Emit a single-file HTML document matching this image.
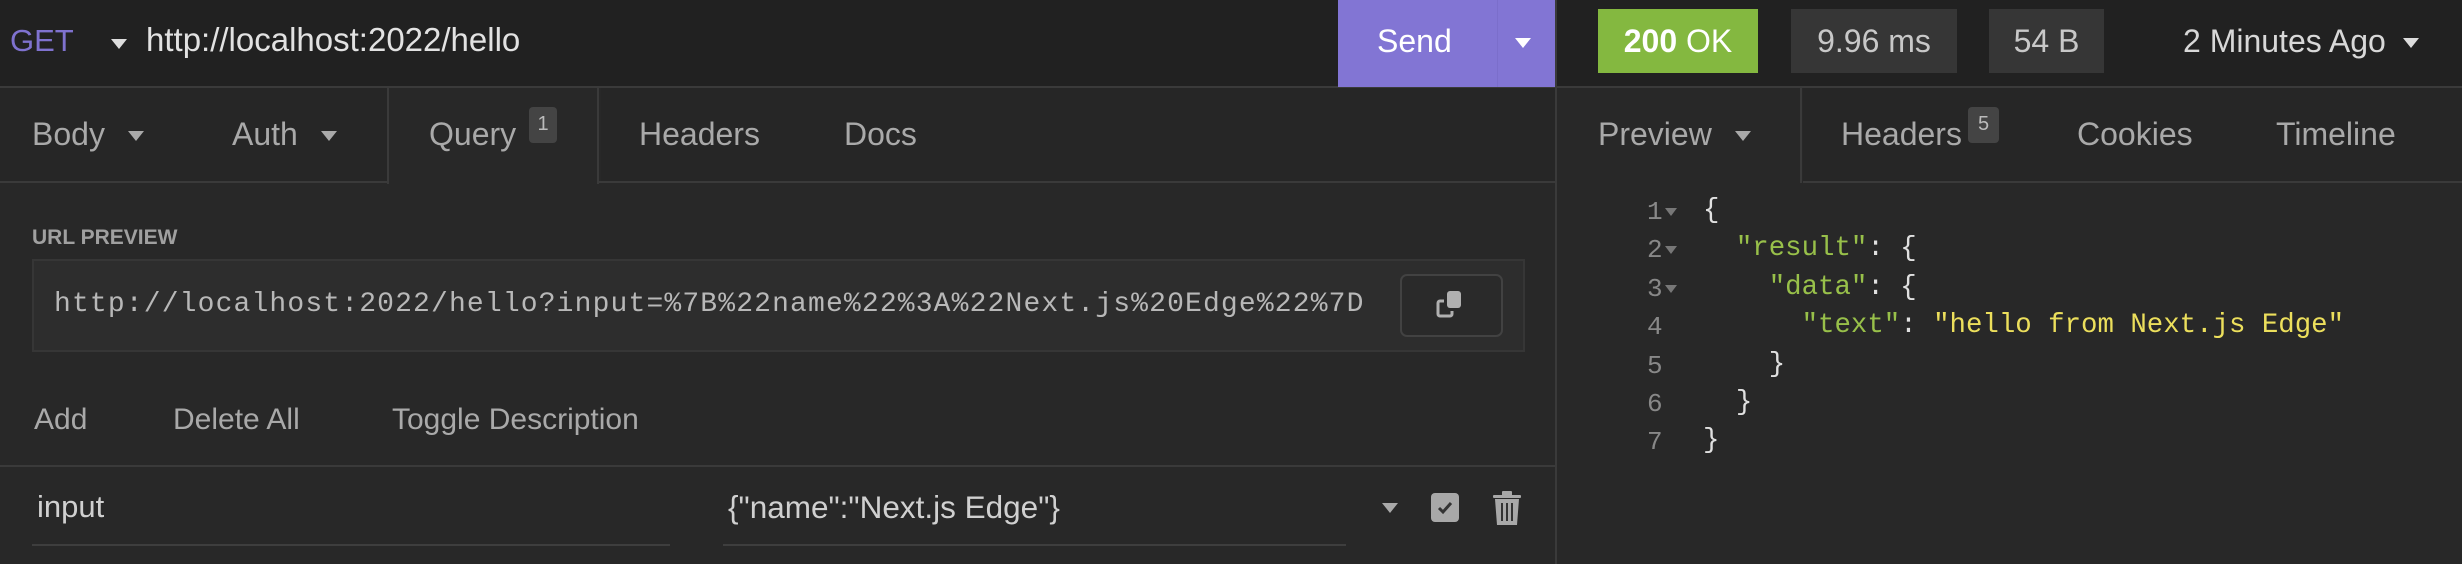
<!DOCTYPE html>
<html><head><meta charset="utf-8"><style>
*{margin:0;padding:0;box-sizing:border-box}
body{width:2462px;height:564px;background:#282828;font-family:"Liberation Sans",sans-serif;color:#a9a9a9;position:relative;overflow:hidden}
.a{position:absolute;white-space:nowrap}
.tri{position:absolute;width:0;height:0;border-left:8px solid transparent;border-right:8px solid transparent;border-top:10px solid #a9a9a9}
.mono{font-family:"Liberation Mono",monospace}
.badge{position:absolute;background:#444;color:#bbb;font-size:20px;border-radius:4px;text-align:center;line-height:34px}
</style></head><body>
<div class="a" style="left:0;top:0;width:2462px;height:87px;background:#212121"></div>
<div class="a" style="left:0;top:86px;width:2462px;height:2px;background:#3a3a3a"></div>
<div class="a" style="left:10px;top:23px;font-size:31px;color:#7f72cf">GET</div>
<div class="tri" style="left:111px;top:39px;border-top-color:#ddd"></div>
<div class="a" style="left:146px;top:21px;font-size:33px;color:#e2e2e2">http://localhost:2022/hello</div>
<div class="a" style="left:1338px;top:0;width:218px;height:87px;background:#8275d4"></div>
<div class="a" style="left:1497px;top:0;width:1px;height:87px;background:#7b6ecb"></div>
<div class="a" style="left:1377px;top:23px;font-size:32px;color:#fff">Send</div>
<div class="tri" style="left:1515px;top:38px;border-top-color:#fff"></div>
<div class="a" style="left:1555px;top:0;width:2px;height:564px;background:#3a3a3a"></div>
<div class="a" style="left:1598px;top:9px;width:160px;height:64px;background:#84b840;color:#fff;font-size:32px;line-height:64px;text-align:center"><b>200</b> OK</div>
<div class="a" style="left:1791px;top:9px;width:166px;height:64px;background:#363636;color:#c8c8c8;font-size:32px;line-height:64px;text-align:center">9.96 ms</div>
<div class="a" style="left:1989px;top:9px;width:115px;height:64px;background:#363636;color:#c8c8c8;font-size:32px;line-height:64px;text-align:center">54 B</div>
<div class="a" style="left:2183px;top:23px;font-size:32px;color:#d8d8d8">2 Minutes Ago</div>
<div class="tri" style="left:2403px;top:38px;border-top-color:#ddd"></div>
<div class="a" style="left:0;top:181px;width:1556px;height:2px;background:#3a3a3a"></div>
<div class="a" style="left:387px;top:88px;width:212px;height:96px;background:#282828;border-left:2px solid #3a3a3a;border-right:2px solid #3a3a3a"></div>
<div class="a" style="left:0;top:88px;width:387px;height:93px;background:#262626"></div>
<div class="a" style="left:601px;top:88px;width:954px;height:93px;background:#262626"></div>
<div class="a" style="left:32px;top:116px;font-size:32px">Body</div>
<div class="tri" style="left:128px;top:131px"></div>
<div class="a" style="left:232px;top:116px;font-size:32px">Auth</div>
<div class="tri" style="left:321px;top:131px"></div>
<div class="a" style="left:429px;top:116px;font-size:32px">Query</div>
<div class="badge" style="left:529px;top:107px;width:28px;height:36px">1</div>
<div class="a" style="left:639px;top:116px;font-size:32px">Headers</div>
<div class="a" style="left:844px;top:116px;font-size:32px">Docs</div>
<div class="a" style="left:32px;top:226px;font-size:21px;font-weight:bold;color:#a0a0a0">URL PREVIEW</div>
<div class="a" style="left:32px;top:259px;width:1493px;height:93px;background:#2d2d2d;border:2px solid #363636"></div>
<div class="a mono" style="left:54px;top:289px;font-size:28px;letter-spacing:1.15px;color:#b8b8b8">http://localhost:2022/hello?input=%7B%22name%22%3A%22Next.js%20Edge%22%7D</div>
<div class="a" style="left:1400px;top:274px;width:103px;height:63px;border:2px solid #424242;border-radius:7px;background:#2a2a2a"></div>
<svg class="a" style="left:1430px;top:288px" width="40" height="36" viewBox="0 0 40 36"><rect x="17" y="3" width="14" height="17" rx="3" fill="#b0b0b0"/><path d="M14 13 H10 a2 2 0 0 0 -2 2 V26 a2 2 0 0 0 2 2 H20 a2 2 0 0 0 2 -2 V23" fill="none" stroke="#b0b0b0" stroke-width="3"/></svg>
<div class="a" style="left:34px;top:403px;font-size:30px">Add</div>
<div class="a" style="left:173px;top:403px;font-size:30px">Delete All</div>
<div class="a" style="left:392px;top:403px;font-size:30px">Toggle Description</div>
<div class="a" style="left:0;top:465px;width:1556px;height:2px;background:#3a3a3a"></div>
<div class="a" style="left:37px;top:489px;font-size:31px;color:#d0d0d0">input</div>
<div class="a" style="left:32px;top:544px;width:638px;height:2px;background:#3e3e3e"></div>
<div class="a" style="left:728px;top:489px;font-size:31.5px;color:#d0d0d0">{"name":"Next.js Edge"}</div>
<div class="a" style="left:723px;top:544px;width:623px;height:2px;background:#3e3e3e"></div>
<div class="tri" style="left:1382px;top:503px"></div>
<div class="a" style="left:1431px;top:493px;width:28px;height:29px;background:#a8a8a8;border-radius:4px"></div>
<svg class="a" style="left:1431px;top:493px" width="28" height="29"><path d="M8 15 L12 19 L20 10" fill="none" stroke="#333" stroke-width="3"/></svg>
<svg class="a" style="left:1492px;top:490px" width="30" height="36" viewBox="0 0 30 36"><rect x="1" y="5" width="28" height="3" rx="1" fill="#a8a8a8"/><rect x="10" y="1" width="10" height="5" rx="1" fill="#a8a8a8"/><path d="M3 9 H27 L25 35 H5 Z" fill="#a8a8a8"/><path d="M10 13 V31 M15 13 V31 M20 13 V31" stroke="#333" stroke-width="2"/></svg>
<div class="a" style="left:1557px;top:88px;width:245px;height:95px;background:#282828;border-right:2px solid #3a3a3a"></div>
<div class="a" style="left:1803px;top:88px;width:659px;height:93px;background:#262626"></div>
<div class="a" style="left:1803px;top:181px;width:659px;height:2px;background:#3a3a3a"></div>
<div class="a" style="left:1598px;top:116px;font-size:32px">Preview</div>
<div class="tri" style="left:1735px;top:131px"></div>
<div class="a" style="left:1841px;top:116px;font-size:32px">Headers</div>
<div class="badge" style="left:1968px;top:107px;width:31px;height:36px">5</div>
<div class="a" style="left:2077px;top:116px;font-size:32px">Cookies</div>
<div class="a" style="left:2276px;top:116px;font-size:32px">Timeline</div>
<div class="a mono" style="left:1647px;top:193px;font-size:26px;line-height:38.4px;color:#888">1<br>2<br>3<br>4<br>5<br>6<br>7</div>
<div class="tri" style="left:1665px;top:208px;border-top-color:#777;border-width:8px 6px 0 6px"></div>
<div class="tri" style="left:1665px;top:246px;border-top-color:#777;border-width:8px 6px 0 6px"></div>
<div class="tri" style="left:1665px;top:285px;border-top-color:#777;border-width:8px 6px 0 6px"></div>
<div class="a mono" style="left:1703px;top:192px;font-size:27.4px;line-height:38.4px;color:#e0e0e0;white-space:pre">{
  <span style="color:#98c04a">"result"</span>: {
    <span style="color:#98c04a">"data"</span>: {
      <span style="color:#98c04a">"text"</span>: <span style="color:#ecdf5c">"hello from Next.js Edge"</span>
    }
  }
}</div>
</body></html>
